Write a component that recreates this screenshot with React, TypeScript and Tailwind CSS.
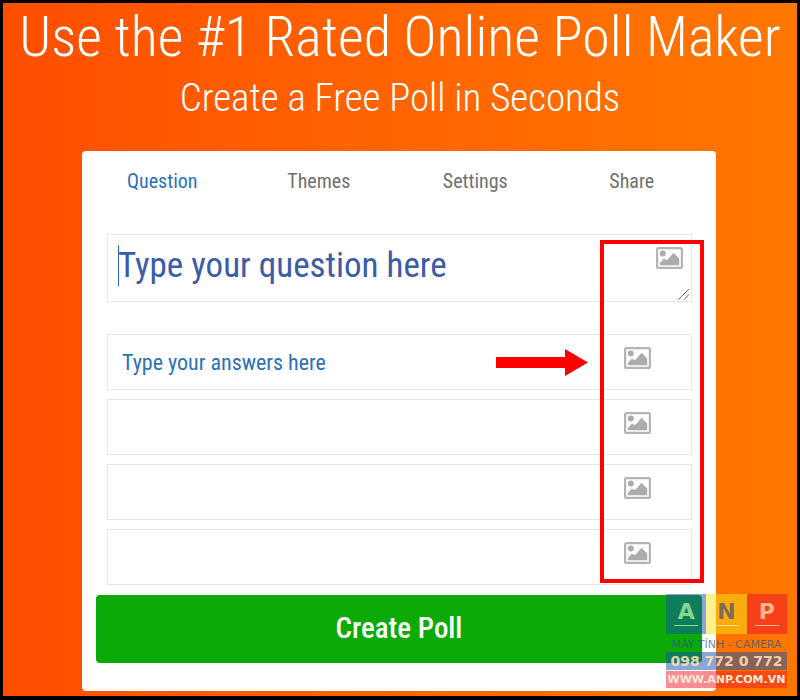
import { useState } from 'react';

const tabs = ['Question', 'Themes', 'Settings', 'Share'];
const answers = ['Type your answers here', '', '', ''];

function PictureIcon() {
  return (
    <svg width="27" height="22" viewBox="0 0 27 22" fill="none" aria-hidden="true">
      <rect x="1.100" y="1.100" width="24.800" height="19.800" rx="1.500" stroke="#b4b4b4" strokeWidth="2.200" />
      <circle cx="6.800" cy="6.500" r="3" fill="#acacac" />
      <path d="M4 18.200v-2.500l4-4.200 2 1.500 2-.8 5.500-6.400 3 3 2.700 2.700v6.700z" fill="#acacac" />
    </svg>
  );
}

function Watermark() {
  return (
    <div className="pointer-events-none absolute right-[10px] bottom-2 w-[121px] font-['DejaVu_Sans'] font-bold">
      <div className="grid h-10 grid-cols-3 text-center text-[22px] leading-[36px]">
        <div className="relative bg-[#114fb0]/50 text-[#a8efa0]/80">
          A
          <span className="absolute inset-x-2 bottom-2 h-px bg-[#a8efa0]/80" />
        </div>
        <div className="relative bg-[#f6e31c]/50 text-[#4e4c74]/70">
          N
          <span className="absolute inset-x-2 bottom-2 h-px bg-[#fff0a0]/80" />
        </div>
        <div className="relative bg-[#f01c28]/60 text-[#ffc69a]/90">
          P
          <span className="absolute inset-x-2 bottom-2 h-px bg-[#ffc69a]/90" />
        </div>
      </div>
      <p className="mt-1 h-[14px] text-center text-[11px] leading-[14px] font-normal whitespace-nowrap text-[#27508e]/70">MÁY TÍNH - CAMERA</p>
      <p className="h-[18px] bg-[#114fb0]/50 text-center text-[14px] leading-[18px] whitespace-nowrap text-[#ffe0b8]/90">098 772 0 772</p>
      <p className="mt-px h-[17px] bg-[#f01c28]/50 text-center text-[11px] leading-[17px] whitespace-nowrap text-[#ffe9d8]">WWW.ANP.COM.VN</p>
    </div>
  );
}

export default function App() {
  const [active, setActive] = useState('Question');

  return (
    <main className="relative min-h-screen border-[3px] border-b-4 border-black bg-linear-to-r from-[#ff4e00] to-[#ff7700] pb-[5px] font-['Roboto_Condensed',Roboto,sans-serif]">
      <header className="text-center font-light text-white">
        <h1 className="text-[56px] leading-[68px] whitespace-nowrap">Use the #1 Rated Online Poll Maker</h1>
        <p className="text-[39px] leading-[54px]">Create a Free Poll in Seconds</p>
      </header>

      {/* poll card */}
      <section className="relative mt-[26px] mr-[81px] ml-[79px] rounded bg-white pb-7">
        <nav className="flex pr-1.5 pl-0.5">
          {tabs.map((tab) => (
            <button
              key={tab}
              type="button"
              onClick={() => setActive(tab)}
              className={`h-[60px] flex-1 text-[20px] ${active === tab ? 'text-[#2a72b5]' : 'text-[#707070]'}`}
            >
              {tab}
            </button>
          ))}
        </nav>

        <form onSubmit={(e) => e.preventDefault()}>
          <div className="mt-[23px] mr-6 ml-[25px]">
            <div className="relative h-[68px] border border-[#e6e6e6]">
              <textarea
                aria-label="Question"
                rows={1}
                placeholder="Type your question here"
                className="block h-full w-full resize-none overflow-hidden px-2.5 py-2.5 text-[35px] leading-[42px] text-[#3c5ba9] outline-none placeholder:text-[#3c5ba9]"
              />
              <span className="absolute top-2.5 left-2.5 h-[41px] w-px bg-[#2a62b5]" />
              <button type="button" aria-label="Add question image" className="absolute top-3 right-2">
                <PictureIcon />
              </button>
              <svg className="absolute right-px bottom-px" width="12" height="12" viewBox="0 0 12 12" stroke="#666" aria-hidden="true">
                <path d="M.5 11.500L11 1M6 11.500L11 6.500" />
              </svg>
            </div>

            <div className="mt-8 flex flex-col gap-[9px]">
              {answers.map((text, i) => (
                <div key={i} className="flex h-14 items-center border border-[#e6e6e6] pr-10">
                  <input
                    aria-label={`Answer ${i + 1}`}
                    placeholder={text}
                    className="h-full min-w-0 flex-1 px-3.5 text-[22px] text-[#2a72b5] outline-none placeholder:text-[#2a72b5]"
                  />
                  <button type="button" aria-label="Add answer image" className="mb-2">
                    <PictureIcon />
                  </button>
                </div>
              ))}
            </div>
          </div>

          <div className="mt-2.5 mr-3.5 ml-3.5">
            <button type="submit" className="h-[68px] w-full rounded bg-[#0caa06] text-[29px] font-medium text-white">
              Create Poll
            </button>
          </div>
        </form>

        {/* callout around the image buttons */}
        <div className="pointer-events-none absolute top-[89px] right-3 h-[343px] w-[104px] border-4 border-[#f00]" />
        <svg className="pointer-events-none absolute top-[198px] right-32" width="92" height="27" viewBox="0 0 92 27" fill="#f00" aria-hidden="true">
          <path d="M0 8h69V0l23 13.500L69 27v-8H0z" />
        </svg>
      </section>

      <Watermark />
    </main>
  );
}
